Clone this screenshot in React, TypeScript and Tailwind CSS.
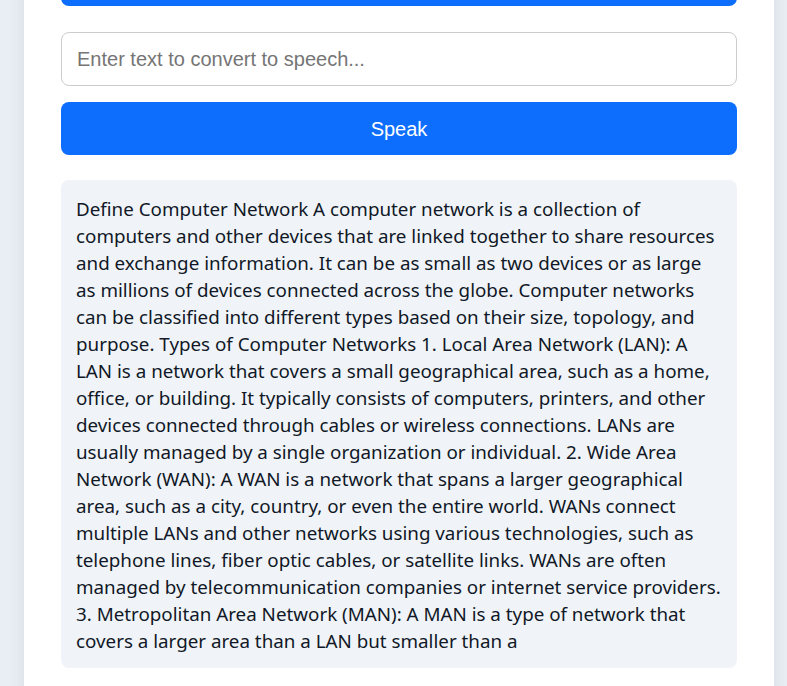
import React from "react";

const LINES = [
  "Define Computer Network A computer network is a collection of",
  "computers and other devices that are linked together to share resources",
  "and exchange information. It can be as small as two devices or as large",
  "as millions of devices connected across the globe. Computer networks",
  "can be classified into different types based on their size, topology, and",
  "purpose. Types of Computer Networks 1. Local Area Network (LAN): A",
  "LAN is a network that covers a small geographical area, such as a home,",
  "office, or building. It typically consists of computers, printers, and other",
  "devices connected through cables or wireless connections. LANs are",
  "usually managed by a single organization or individual. 2. Wide Area",
  "Network (WAN): A WAN is a network that spans a larger geographical",
  "area, such as a city, country, or even the entire world. WANs connect",
  "multiple LANs and other networks using various technologies, such as",
  "telephone lines, fiber optic cables, or satellite links. WANs are often",
  "managed by telecommunication companies or internet service providers.",
  "3. Metropolitan Area Network (MAN): A MAN is a type of network that",
  "covers a larger area than a LAN but smaller than a",
];

export default function App() {
  return (
    <div className="h-[686px] w-full overflow-hidden bg-[#e9eef5]">
      <div className="ml-[24px] -mt-[40px] h-[800px] w-[750px] bg-white px-[37px] pt-0 shadow-[0_0_16px_rgba(0,0,0,0.08)]">
        <div className="h-[46px] rounded-b-[8px] bg-[#0d6efd]" />
        <input
          className="mt-[26px] block h-[54px] w-full rounded-[8px] border border-[#cccccc] bg-white px-[15px] text-[20px] text-[#212529] outline-none placeholder:text-[#757575]"
          style={{ fontFamily: '"Liberation Sans", Arial, sans-serif' }}
          placeholder="Enter text to convert to speech..."
        />
        <button
          className="mt-[16px] flex h-[53px] w-full items-center justify-center rounded-[8px] bg-[#0d6efd] text-[20px] text-white"
          style={{ fontFamily: '"Liberation Sans", Arial, sans-serif' }}
        >
          Speak
        </button>
        <div
          className="mt-[25px] rounded-[8px] bg-[#f0f4f8] px-[15px] pb-[13px] pt-[16px] text-[18.8px] leading-[27px] text-[#111827]"
          style={{ fontFamily: '"Noto Sans", "Open Sans", sans-serif' }}
        >
          {LINES.map((l, i) => (
            <div key={i} className="whitespace-nowrap">
              {l}
            </div>
          ))}
        </div>
      </div>
    </div>
  );
}
